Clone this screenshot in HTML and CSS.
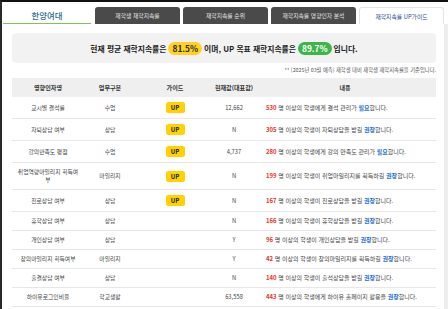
FILE: index.html
```html
<!DOCTYPE html>
<html lang="ko">
<head>
<meta charset="utf-8">
<title>재학지속률 UP가이드</title>
<link rel="stylesheet" href="styles.css">
</head>
<body>
<div class="frame">
  <nav class="tabs">
    <div class="logo">한양여대</div>
    <div class="tab">재학생 재학지속률</div>
    <div class="tab">재학지속률 순위</div>
    <div class="tab">재학지속률 영향인자 분석</div>
    <div class="tab active">재학지속률 UP가이드</div>
  </nav>
  <div class="body">
    <main class="content">
      <div class="summary">
        <span>현재 평균 재학지속률은</span>
        <span class="pill yellow">81.5%</span>
        <span>이며, UP 목표 재학지속률은</span>
        <span class="pill green">89.7%</span>
        <span>입니다.</span>
      </div>
      <p class="note">** [2025년 03월 예측] 재학생 대비 재학생 재학지속률을 기준입니다.</p>
      <table class="guide">
        <colgroup>
          <col class="c1"><col class="c2"><col class="c3"><col class="c4"><col class="c5">
        </colgroup>
        <thead>
          <tr><th>영향인자명</th><th>업무구분</th><th>가이드</th><th>현재값(대표값)</th><th>내용</th></tr>
        </thead>
        <tbody>
          <tr><td>교시별 결석률</td><td>수업</td><td><span class="badge">UP</span></td><td>12,662</td><td class="desc"><b class="num">530</b> 명 이상의 학생에게 결석 관리가 <b class="em">필요</b>합니다.</td></tr>
          <tr><td>자퇴상담 여부</td><td>상담</td><td><span class="badge">UP</span></td><td>N</td><td class="desc"><b class="num">305</b> 명 이상의 학생이 자퇴상담을 받길 <b class="em">권장</b>합니다.</td></tr>
          <tr><td>강의만족도 평점</td><td>수업</td><td><span class="badge">UP</span></td><td>4,737</td><td class="desc"><b class="num">280</b> 명 이상의 학생에게 강의 만족도 관리가 <b class="em">필요</b>합니다.</td></tr>
          <tr><td>취업역량마일리지 획득여부</td><td>마일리지</td><td><span class="badge">UP</span></td><td>N</td><td class="desc"><b class="num">199</b> 명 이상의 학생이 취업마일리지를 획득하길 <b class="em">권장</b>합니다.</td></tr>
          <tr><td>진로상담 여부</td><td>상담</td><td><span class="badge">UP</span></td><td>N</td><td class="desc"><b class="num">167</b> 명 이상의 학생이 진로상담을 받길 <b class="em">권장</b>합니다.</td></tr>
          <tr><td>휴학상담 여부</td><td>상담</td><td></td><td>N</td><td class="desc"><b class="num">166</b> 명 이상의 학생이 휴학상담을 받길 <b class="em">권장</b>합니다.</td></tr>
          <tr><td>개인상담 여부</td><td>상담</td><td></td><td>Y</td><td class="desc"><b class="num">96</b> 명 이상의 학생이 개인상담을 받길 <b class="em">권장</b>합니다.</td></tr>
          <tr><td>창의마일리지 획득여부</td><td>마일리지</td><td></td><td>Y</td><td class="desc"><b class="num">42</b> 명 이상의 학생이 창의마일리지를 획득하길 <b class="em">권장</b>합니다.</td></tr>
          <tr><td>출결상담 여부</td><td>상담</td><td></td><td>N</td><td class="desc"><b class="num">140</b> 명 이상의 학생이 출석상담을 받길 <b class="em">권장</b>합니다.</td></tr>
          <tr><td>하이유로그인비율</td><td>학교생활</td><td></td><td>63,558</td><td class="desc"><b class="num">443</b> 명 이상의 학생에게 하이유 홈페이지 활용을 <b class="em">권장</b>합니다.</td></tr>
        </tbody>
      </table>
    </main>
    <div class="rail"></div>
  </div>
</div>
</body>
</html>
```

FILE: styles.css
```css
html, body {
  margin: 0;
  padding: 0;
}
body {
  width: 448px;
  height: 309px;
  overflow: hidden;
  background: #ffffff;
  font-family: "Noto Sans CJK KR", "Noto Sans", sans-serif;
  color: #333;
}
.frame {
  box-sizing: border-box;
  height: 309px;
  border-top: 2px solid #111;
  border-left: 2px solid #2a2a2a;
  display: flex;
  flex-direction: column;
}
.tabs {
  display: flex;
  align-items: flex-end;
  height: 22px;
  padding-left: 1px;
  gap: 3px;
}
.logo {
  box-sizing: border-box;
  width: 88px;
  height: 22px;
  margin-right: 1px;
  padding-top: 4px;
  display: flex;
  align-items: center;
  justify-content: center;
  border-bottom: 1px solid #7cc35c;
  font-size: 8.4px;
  font-weight: 500;
  color: #2e6b8c;
}
.tab {
  box-sizing: border-box;
  width: 85px;
  height: 17px;
  border-radius: 3px 3px 0 0;
  background: #4a4a4a;
  color: #e2e2e2;
  font-size: 5.8px;
  display: flex;
  align-items: center;
  justify-content: center;
}
.tab.active {
  background: #ffffff;
  color: #2d4b8a;
  border: 1px solid #e4e4e4;
  border-bottom: none;
}
.body {
  flex: 1;
  display: flex;
}
.content {
  box-sizing: border-box;
  width: 442px;
  padding: 9px 8px 0 10px;
}
.rail {
  flex: 1;
  background: #ededed;
}
.summary {
  height: 30px;
  border-radius: 4px;
  background: #f2f2f2;
  display: flex;
  align-items: center;
  justify-content: center;
  gap: 2px;
  font-size: 7.8px;
  font-weight: 700;
  color: #222;
}
.pill {
  padding: 1px 4px;
  border-radius: 7px;
  font-size: 8.4px;
  font-weight: 600;
  line-height: 11px;
}
.pill.yellow {
  background: #ffd21f;
  color: #2a2a2a;
}
.pill.green {
  background: #3db54a;
  color: #ffffff;
}
.note {
  margin: 3px 0 0;
  text-align: right;
  font-size: 5.3px;
  line-height: 8px;
  color: #555;
}
.guide {
  margin-top: 4px;
  width: 100%;
  border-collapse: collapse;
  table-layout: fixed;
}
.c1 { width: 72px; }
.c2 { width: 52px; }
.c3 { width: 78px; }
.c4 { width: 40px; }
.guide th {
  height: 19px;
  padding: 0;
  background: #efefef;
  font-size: 6.1px;
  font-weight: 700;
  color: #333;
  text-align: center;
}
.guide td {
  padding: 5px 4px;
  line-height: 8px;
  font-size: 5.8px;
  color: #444;
  text-align: center;
  vertical-align: middle;
  border-bottom: 1px solid #e7e7e7;
}
.guide td.desc {
  text-align: left;
  padding-left: 12px;
  font-size: 6px;
}
.badge {
  display: inline-block;
  width: 19px;
  height: 11px;
  line-height: 11px;
  border-radius: 2.5px;
  background: #ffd200;
  color: #222;
  font-size: 6px;
  font-weight: 700;
  vertical-align: middle;
}
.num {
  color: #e8332c;
  font-weight: 700;
}
.em {
  color: #1f6fd6;
  font-weight: 700;
}
```
